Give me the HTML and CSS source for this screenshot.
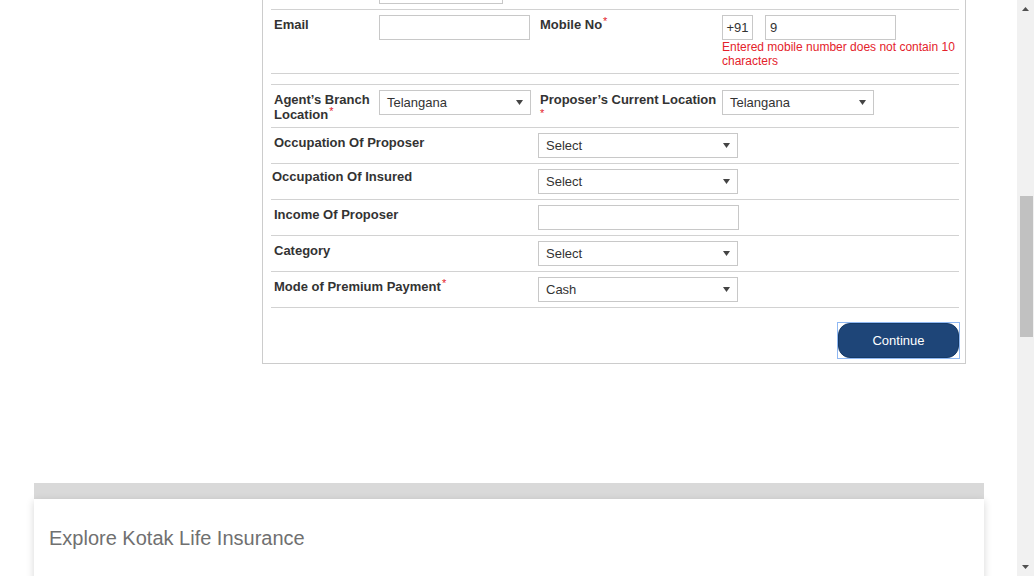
FILE: index.html
```html
<!DOCTYPE html>
<html lang="en">
<head>
<meta charset="utf-8">
<title>Proposal Form</title>
<link rel="stylesheet" href="styles.css">
</head>
<body>
<div class="page">
  <section class="form-card">
    <div class="row row-pair">
      <div class="label"></div>
      <div class="field"><div class="input w-top"></div></div>
    </div>

    <div class="row row-pair">
      <div class="label">Email</div>
      <div class="field"><div class="input w-email"></div></div>
      <div class="label label-2">Mobile No<sup class="req">*</sup></div>
      <div class="field">
        <div class="mobile">
          <div class="input code">+91</div>
          <div class="input num">9</div>
        </div>
        <div class="error">Entered mobile number does not contain 10 characters</div>
      </div>
    </div>

    <div class="row row-spacer"></div>

    <div class="row row-pair">
      <div class="label">Agent’s Branch Location<sup class="req">*</sup></div>
      <div class="field">
        <div class="select w-sel-sm"><span>Telangana</span><svg class="caret" width="7" height="5" viewBox="0 0 7 5"><path d="M0 0H7L3.5 5Z"/></svg></div>
      </div>
      <div class="label label-2 label-wrap">Proposer’s Current Location<wbr><sup class="req req-wrap">*</sup></div>
      <div class="field">
        <div class="select w-sel-sm"><span>Telangana</span><svg class="caret" width="7" height="5" viewBox="0 0 7 5"><path d="M0 0H7L3.5 5Z"/></svg></div>
      </div>
    </div>

    <div class="row row-single">
      <div class="label">Occupation Of Proposer</div>
      <div class="field">
        <div class="select w-sel"><span>Select</span><svg class="caret" width="7" height="5" viewBox="0 0 7 5"><path d="M0 0H7L3.5 5Z"/></svg></div>
      </div>
    </div>

    <div class="row row-single">
      <div class="label label-tight">Occupation Of Insured</div>
      <div class="field">
        <div class="select w-sel"><span>Select</span><svg class="caret" width="7" height="5" viewBox="0 0 7 5"><path d="M0 0H7L3.5 5Z"/></svg></div>
      </div>
    </div>

    <div class="row row-single">
      <div class="label">Income Of Proposer</div>
      <div class="field"><div class="input w-income"></div></div>
    </div>

    <div class="row row-single">
      <div class="label">Category</div>
      <div class="field">
        <div class="select w-sel"><span>Select</span><svg class="caret" width="7" height="5" viewBox="0 0 7 5"><path d="M0 0H7L3.5 5Z"/></svg></div>
      </div>
    </div>

    <div class="row row-single">
      <div class="label">Mode of Premium Payment<sup class="req">*</sup></div>
      <div class="field">
        <div class="select w-sel"><span>Cash</span><svg class="caret" width="7" height="5" viewBox="0 0 7 5"><path d="M0 0H7L3.5 5Z"/></svg></div>
      </div>
    </div>

    <div class="actions">
      <div class="focus-ring"><button class="btn-continue" type="button">Continue</button></div>
    </div>
  </section>

  <section class="explore">
    <div class="explore-bar"></div>
    <div class="explore-panel">
      <h2 class="explore-title">Explore Kotak Life Insurance</h2>
    </div>
  </section>
</div>

<div class="scrollbar">
  <svg class="sb-arrow" width="7" height="4" viewBox="0 0 7 4"><path d="M3.5 0L7 4H0Z"/></svg>
  <div class="sb-track"><div class="sb-thumb"></div></div>
  <svg class="sb-arrow" width="7" height="4" viewBox="0 0 7 4"><path d="M0 0H7L3.5 4Z"/></svg>
</div>
</body>
</html>
```

FILE: styles.css
```css
* { box-sizing: border-box; }

html, body {
  margin: 0;
  padding: 0;
  height: 100%;
  overflow: hidden;
  background: #fff;
  font-family: "Liberation Sans", Arial, sans-serif;
  color: #333;
}

.page {
  width: 1017px;
}

/* ---------- form card ---------- */
.form-card {
  margin: -27px 0 0 262px;
  width: 704px;
  border: 1px solid #cccccc;
  padding: 0 6px 0 8px;
}

.row {
  border-bottom: 1px solid #d2d2d2;
  padding: 5px 0;
  display: grid;
  align-items: start;
}

.row-pair { grid-template-columns: 108px 159px 184px 1fr; }
.row-single { grid-template-columns: 267px 1fr; }
.row-spacer { display: block; height: 11px; padding: 0; }

.label {
  font-size: 13px;
  font-weight: bold;
  line-height: 15px;
  padding: 2px 0 0 3px;
  color: #333;
}
.label-2 { padding-left: 2px; }
.label-wrap { padding-right: 4px; }
.label-tight { padding: 0 0 0 1px; }

.req {
  color: #e4222b;
  font-weight: normal;
  font-size: 11px;
  line-height: 0;
  vertical-align: 4px;
  margin-left: 1px;
}
.req-wrap { margin-left: 0; vertical-align: 2px; }

.input {
  height: 25px;
  border: 1px solid #c8c8c8;
  background: #fff;
  font-size: 13px;
  line-height: 23px;
  padding: 0 4px;
  color: #333;
}
.w-top { width: 124px; }
.w-email { width: 151px; }
.w-income { width: 201px; }

.mobile {
  display: flex;
  gap: 12px;
}
.code { width: 31px; text-align: center; padding: 0; }
.num { width: 131px; }

.error {
  font-size: 12px;
  line-height: 14px;
  color: #e4222b;
}

.select {
  height: 25px;
  border: 1px solid #c8c8c8;
  background: #fff;
  font-size: 13px;
  color: #333;
  display: flex;
  align-items: center;
  justify-content: space-between;
  padding: 0 7px 0 7px;
}
.w-sel-sm { width: 152px; }
.w-sel { width: 200px; }

.caret { fill: #444; display: block; }

/* ---------- continue ---------- */
.actions {
  display: flex;
  justify-content: flex-end;
  padding: 14px 0 4px;
  margin-right: -1px;
}
.focus-ring {
  border: 1px solid #8fb8f3;
  display: flex;
}
.btn-continue {
  width: 121px;
  height: 35px;
  border: 1px solid #163a66;
  border-radius: 12px;
  background: #1e4578;
  color: #fff;
  font-family: "Liberation Sans", Arial, sans-serif;
  font-size: 13px;
  padding: 0;
  cursor: pointer;
}

/* ---------- explore ---------- */
.explore {
  margin: 119px 0 0 34px;
  width: 950px;
}
.explore-bar {
  height: 16px;
  background: #d9d9d9;
}
.explore-panel {
  background: #fff;
  height: 160px;
  padding: 28px 15px 0;
  box-shadow: 0 2px 8px rgba(0, 0, 0, 0.16);
}
.explore-title {
  margin: 0;
  font-size: 20px;
  font-weight: normal;
  line-height: 23px;
  color: #707070;
}

/* ---------- fake scrollbar ---------- */
.scrollbar {
  position: fixed;
  top: 0;
  right: 0;
  width: 17px;
  height: 100%;
  background: #f1f1f1;
  display: flex;
  flex-direction: column;
  align-items: center;
  padding: 7px 0 7px;
}
.sb-arrow { fill: #505050; display: block; flex: none; }
.sb-track {
  flex: 1;
  width: 100%;
  padding-top: 185px;
  display: flex;
  justify-content: center;
}
.sb-thumb {
  width: 13px;
  height: 141px;
  background: #c1c1c1;
  margin-left: 1px;
}
```
